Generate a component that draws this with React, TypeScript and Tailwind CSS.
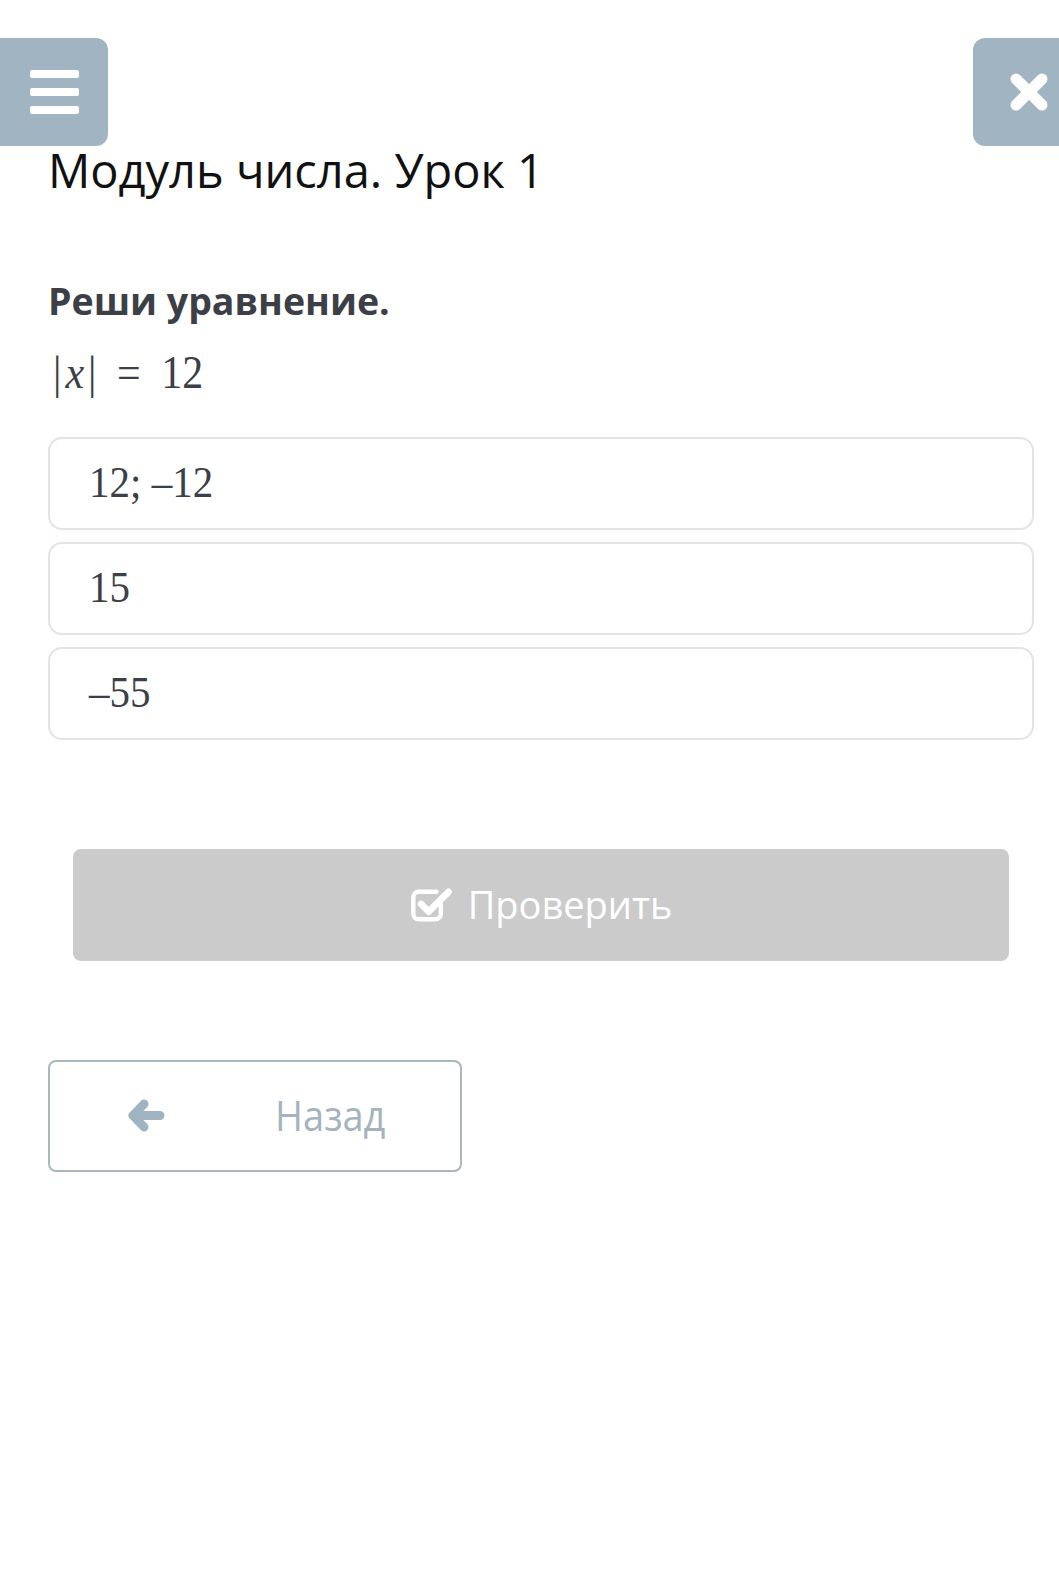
const options = ["12; –12", "15", "–55"];

function CheckSquare() {
  return (
    <svg width="44" height="38" viewBox="0 0 40 34" fill="none">
      <path
        d="M28 16v9a5 5 0 0 1-5 5H8a5 5 0 0 1-5-5V10a5 5 0 0 1 5-5h16"
        stroke="white"
        strokeWidth="4"
        strokeLinecap="round"
      />
      <path
        d="M10 16l7 7L35 5"
        stroke="white"
        strokeWidth="6"
        strokeLinecap="round"
        strokeLinejoin="round"
      />
    </svg>
  );
}

function ArrowBack() {
  return (
    <svg width="38" height="33" viewBox="0 0 38 33" fill="none">
      <path
        d="M6 16.5h27M17 5L6 16.5 17 28"
        stroke="#9fb3c0"
        strokeWidth="9"
        strokeLinecap="round"
        strokeLinejoin="round"
      />
    </svg>
  );
}

export default function App() {
  return (
    <div className="min-h-[1587px] bg-white font-['Open_Sans',sans-serif]">
      <div className="flex justify-between pt-[38px]">
        <button className="flex h-[108px] w-[108px] flex-col items-center justify-center gap-[10px] rounded-r-[12px] bg-[#a0b4c1]">
          <span className="h-[8px] w-[49px] rounded-[2px] bg-white" />
          <span className="h-[8px] w-[49px] rounded-[2px] bg-white" />
          <span className="h-[8px] w-[49px] rounded-[2px] bg-white" />
        </button>
        <button className="flex h-[108px] w-[86px] items-center rounded-l-[12px] bg-[#a0b4c1] pl-[36px]">
          <svg width="40" height="40" viewBox="0 0 40 40">
            <path
              d="M7 7l26 26M33 7L7 33"
              stroke="white"
              strokeWidth="11"
              strokeLinecap="round"
            />
          </svg>
        </button>
      </div>

      <div className="pl-[48px] pr-[25px]">
        <h1 className="mt-px text-[47px] leading-none text-[#111]">Модуль числа. Урок 1</h1>

        <p className="mt-[88px] text-[37.5px] font-bold leading-none text-[#3c4046]">Реши уравнение.</p>
        <p className="mt-[32px] pl-[5px] font-['Liberation_Serif',serif] text-[42px] leading-none text-[#3c4046]">
          <span className="inline-block scale-y-110">
            |<i className="px-[4px]">x</i>| <span className="px-[10px]">=</span> 12
          </span>
        </p>

        <ul className="mt-[43px] flex flex-col gap-[12px]">
          {options.map((o) => (
            <li
              key={o}
              className="flex h-[93px] items-center rounded-[14px] border-2 border-[#e4e4e4] pl-[39px] font-['Liberation_Serif',serif] text-[41px] text-[#3c4046]"
            >
              <span className="inline-block scale-y-110">{o}</span>
            </li>
          ))}
        </ul>

        <div className="mt-[109px] px-[25px]">
          <button className="flex h-[112px] w-full items-center justify-center gap-[14px] rounded-[8px] bg-[#cbcbcb] text-[38px] text-white">
            <CheckSquare />
            Проверить
          </button>
        </div>

        <button className="mt-[99px] flex h-[112px] w-[414px] items-center rounded-[8px] border-2 border-[#a9b7c0] pl-[77px] text-[#a4b4be]">
          <ArrowBack />
          <span className="ml-[110px] inline-block scale-y-110 text-[38px]">Назад</span>
        </button>
      </div>
    </div>
  );
}
